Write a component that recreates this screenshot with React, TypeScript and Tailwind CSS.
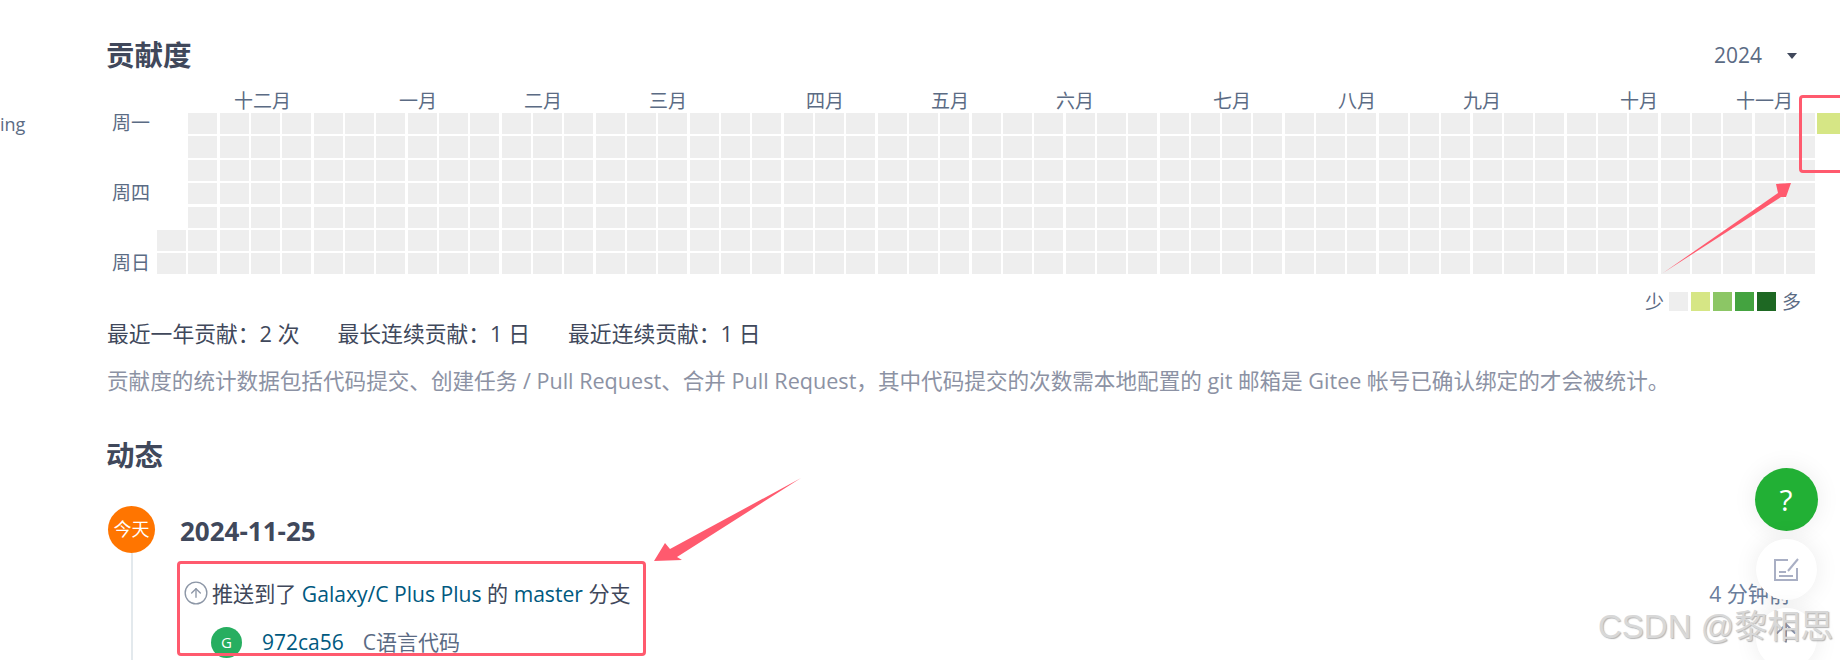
import { CircleArrowUp, ArrowUp } from "lucide-react";

const months = [
  { label: "十二月", cls: "w-[165px]" },
  { label: "一月", cls: "w-[125px]" },
  { label: "二月", cls: "w-[125px]" },
  { label: "三月", cls: "w-[157px]" },
  { label: "四月", cls: "w-[125px]" },
  { label: "五月", cls: "w-[125px]" },
  { label: "六月", cls: "w-[157px]" },
  { label: "七月", cls: "w-[125px]" },
  { label: "八月", cls: "w-[125px]" },
  { label: "九月", cls: "w-[157px]" },
  { label: "十月", cls: "w-[116px]" },
  { label: "十一月", cls: "w-[60px]" },
];

const weekdays = ["周一", "", "", "周四", "", "", "周日"];
const legend = ["bg-[#eeeeee]", "bg-[#d6e685]", "bg-[#8cc665]", "bg-[#44a340]", "bg-[#1e6823]"];

// 54 weeks x 7 days, first week only has Sat/Sun, last week only Monday
const cells = Array.from({ length: 54 * 7 }, (_, i) => {
  const week = Math.floor(i / 7);
  const day = i % 7;
  if (week === 0 && day < 5) return "bg-transparent";
  if (week === 53) return day === 0 ? "bg-[#d6e685]" : "bg-transparent";
  return "bg-[#eeeeee]";
});

function Heatmap() {
  return (
    <div className="flex">
      <div className="w-[49px] shrink-0 pl-[4px] grid grid-rows-[repeat(7,21.2px)] gap-y-[2.2px]">
        {weekdays.map((d, i) => (
          <div key={i} className="text-[19px] leading-[21px] text-[#5b6b84] whitespace-nowrap">
            {d}
          </div>
        ))}
      </div>
      <div className="grid grid-flow-col grid-rows-[repeat(7,21.2px)] auto-cols-[29px] gap-x-[2.33px] gap-y-[2.2px]">
        {cells.map((c, i) => (
          <div key={i} className={c} />
        ))}
      </div>
    </div>
  );
}

function Annotations() {
  return (
    <>
      <div className="absolute left-[1799px] top-[95px] w-[60px] h-[78px] border-[3px] border-[#ff5a6e] rounded-[4px]" />
      <div className="absolute left-[177px] top-[561px] w-[469px] h-[95px] border-[3px] border-[#ff5a6e] rounded-[4px]" />
      <svg className="absolute left-0 top-0 pointer-events-none" width="1840" height="660">
        <polygon points="1663,273 1778,193 1776,184 1791,183 1786,197 1781,197" fill="#ff5a6e" />
        <polygon points="801,478 677,557 682,560 654,561 665,543 670,549" fill="#ff5a6e" />
      </svg>
    </>
  );
}

function FloatingButtons() {
  return (
    <div className="absolute left-[1754px] top-[468px] w-[64px] flex flex-col items-center gap-[8px]">
      <div className="w-[63px] h-[63px] rounded-full bg-[#22b035] flex items-center justify-center text-white text-[30px] font-medium shadow-[0_0_24px_rgba(0,0,0,0.08)]">
        ?
      </div>
      <div className="w-[61px] h-[61px] rounded-full bg-white flex items-center justify-center shadow-[0_0_24px_rgba(0,0,0,0.08)]">
        <svg width="26" height="24" viewBox="0 0 26 24" fill="none" stroke="#a9afc4" strokeWidth="2">
          <path d="M15 2H2v20h22V10" />
          <path d="M25 1 15 13" />
          <path d="M6 14h7M6 18h14" />
        </svg>
      </div>
      <div className="w-[61px] h-[61px] rounded-full bg-white flex items-start justify-center pt-[10px] shadow-[0_0_24px_rgba(0,0,0,0.08)]">
        <ArrowUp size={30} strokeWidth={1.5} color="#8b93ab" />
      </div>
    </div>
  );
}

export default function App() {
  return (
    <div className="relative flex w-[1840px] h-[660px] overflow-hidden bg-white font-['Open_Sans','Noto_Sans_CJK_SC',sans-serif]">
      {/* clipped sidebar */}
      <div className="w-[108px] shrink-0 pt-[110px] text-[18px] leading-[28px] text-[#5b6b84]">ing</div>

      <div className="flex-1 min-w-0 pt-[35px]">
        <div className="flex items-center justify-between h-[40px] pr-[43px]">
          <h2 className="-ml-[2px] text-[28.5px] font-bold text-[#40485b]">贡献度</h2>
          <div className="flex items-center gap-[25px] pt-[2px] text-[21px] text-[#5b6b84]">
            2024
            <span className="w-0 h-0 border-x-[5.5px] border-x-transparent border-t-[6px] border-t-[#40485b]" />
          </div>
        </div>

        <div className="flex h-[24px] mt-[14px] pl-[126px] text-[19px] leading-[24px] text-[#5b6b84] whitespace-nowrap">
          {months.map((m) => (
            <div key={m.label} className={m.cls}>
              {m.label}
            </div>
          ))}
        </div>

        <Heatmap />

        <div className="flex items-center justify-end gap-[3px] h-[19px] mt-[18px] pr-[39px] text-[19px] text-[#5b6b84]">
          <span className="mr-[2px]">少</span>
          {legend.map((c) => (
            <div key={c} className={`w-[19px] h-[19px] ${c}`} />
          ))}
          <span className="ml-[3px]">多</span>
        </div>

        <div className="flex gap-[38px] h-[30px] mt-[8px] -ml-[1px] text-[21.8px] leading-[30px] text-[#40485b]">
          <span>最近一年贡献：2 次</span>
          <span>最长连续贡献：1 日</span>
          <span>最近连续贡献：1 日</span>
        </div>

        <p className="h-[30px] mt-[17px] -ml-[1px] text-[21.6px] leading-[30px] text-[#8c92a4] whitespace-nowrap">
          贡献度的统计数据包括代码提交、创建任务 / Pull Request、合并 Pull Request，其中代码提交的次数需本地配置的 git 邮箱是 Gitee 帐号已确认绑定的才会被统计。
        </p>

        <h2 className="h-[40px] mt-[39px] -ml-[2px] text-[28.5px] leading-[40px] font-bold text-[#40485b]">动态</h2>

        <div className="flex mt-[31px] h-[200px] pr-[50px]">
          <div className="w-[47px] shrink-0 flex flex-col items-center">
            <div className="w-[47px] h-[47px] shrink-0 rounded-full bg-[#ff7500] flex items-center justify-center text-white text-[18px]">
              今天
            </div>
            <div className="w-[2px] flex-1 bg-[#e3e9ed]" />
          </div>
          <div className="flex-1 ml-[25px]">
            <div className="h-[47px] text-[26px] leading-[51px] font-bold text-[#40485b]">2024-11-25</div>
            <div className="flex items-center justify-between h-[30px] mt-[25px] ml-[3px] text-[21.1px] text-[#40485b]">
              <div className="flex items-center gap-[3px]">
                <CircleArrowUp size={26} strokeWidth={1.25} color="#8c96a6" />
                <span>
                  推送到了 <span className="text-[#005980]">Galaxy/C Plus Plus</span> 的{" "}
                  <span className="text-[#005980]">master</span> 分支
                </span>
              </div>
              <span className="text-[#6a7d9b]">4 分钟前</span>
            </div>
            <div className="flex items-center mt-[19px] h-[30px] ml-[31px] text-[21px]">
              <div className="w-[31px] h-[31px] rounded-full bg-[#27ae60] flex items-center justify-center text-white text-[15px]">
                G
              </div>
              <span className="ml-[20px] text-[#005980]">972ca56</span>
              <span className="ml-[19px] text-[#5b6b84]">C语言代码</span>
            </div>
          </div>
        </div>
      </div>

      <Annotations />
      <FloatingButtons />

      <div className="absolute left-[1598px] top-[607px] text-[33px] leading-[40px] text-[#d8d8d8] [text-shadow:1px_1px_1px_rgba(110,110,110,0.5)] whitespace-nowrap font-['Liberation_Sans','Noto_Sans_CJK_SC',sans-serif]">
        CSDN @黎相思
      </div>
    </div>
  );
}
